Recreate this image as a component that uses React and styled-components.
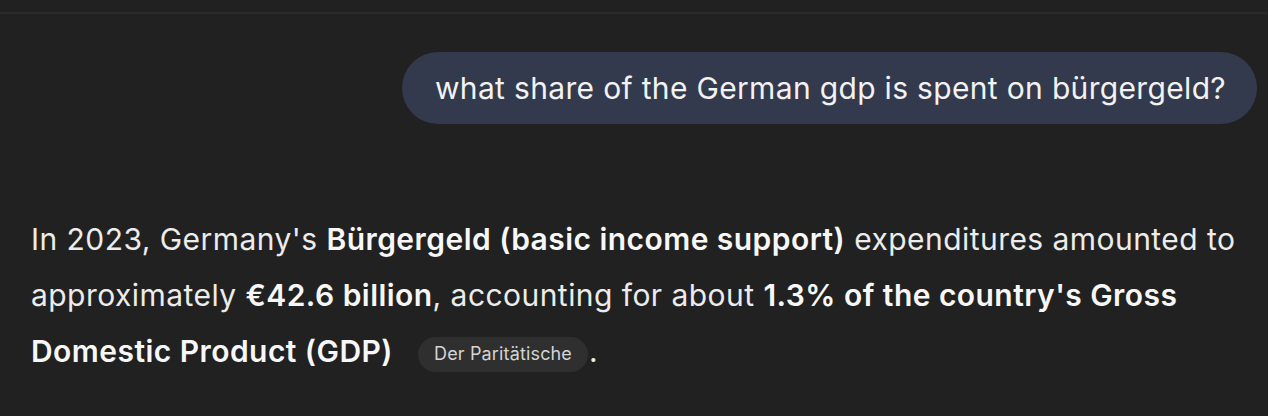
import React from 'react'
import styled, { createGlobalStyle } from 'styled-components'

const GlobalStyle = createGlobalStyle`
  html, body {
    margin: 0;
    padding: 0;
    background: #212121;
  }
  body {
    font-family: Inter, Roboto, "Liberation Sans", sans-serif;
    color: #ececec;
    -webkit-font-smoothing: antialiased;
  }
`

const Page = styled.div`
  width: 1268px;
  height: 416px;
  overflow: hidden;
  background: #212121;
`

const TopBar = styled.div`
  height: 12px;
  border-bottom: 2px solid #2a2a2a;
`

const Thread = styled.div`
  display: flex;
  flex-direction: column;
  padding: 38px 11px 0 31px;
`

const UserRow = styled.div`
  display: flex;
  justify-content: flex-end;
`

const Bubble = styled.div`
  height: 72px;
  box-sizing: border-box;
  display: flex;
  align-items: center;
  padding: 0 31px 0 33px;
  border-radius: 36px;
  background: #333a4d;
  color: #f2f2f2;
  font-size: 30px;
  letter-spacing: 0.33px;
  white-space: nowrap;
`

const Answer = styled.p`
  margin: 87px 0 0;
  font-size: 30px;
  line-height: 56px;
  letter-spacing: 0.45px;
  color: #ececec;
  max-width: 1215px;
`

const Strong = styled.strong`
  font-weight: 600;
  color: #f7f7f7;
`

const Source = styled.span`
  display: inline-flex;
  align-items: center;
  height: 35px;
  padding: 0 16px;
  margin: 0 1px 0 25px;
  border-radius: 18px;
  background: #2f2f2f;
  color: #d4d4d4;
  font-size: 18px;
  letter-spacing: 0.15px;
  line-height: 1;
  vertical-align: 2px;
`

export default function App() {
  return (
    <Page>
      <GlobalStyle />
      <TopBar />
      <Thread>
        <UserRow>
          <Bubble>what share of the German gdp is spent on bürgergeld?</Bubble>
        </UserRow>
        <Answer>
          In 2023, Germany's <Strong>Bürgergeld (basic income support)</Strong> expenditures
          amounted to approximately <Strong>€42.6 billion</Strong>, accounting for about{' '}
          <Strong>1.3% of the country's Gross Domestic Product (GDP)</Strong>
          <Source>Der Paritätische</Source>.
        </Answer>
      </Thread>
    </Page>
  )
}
